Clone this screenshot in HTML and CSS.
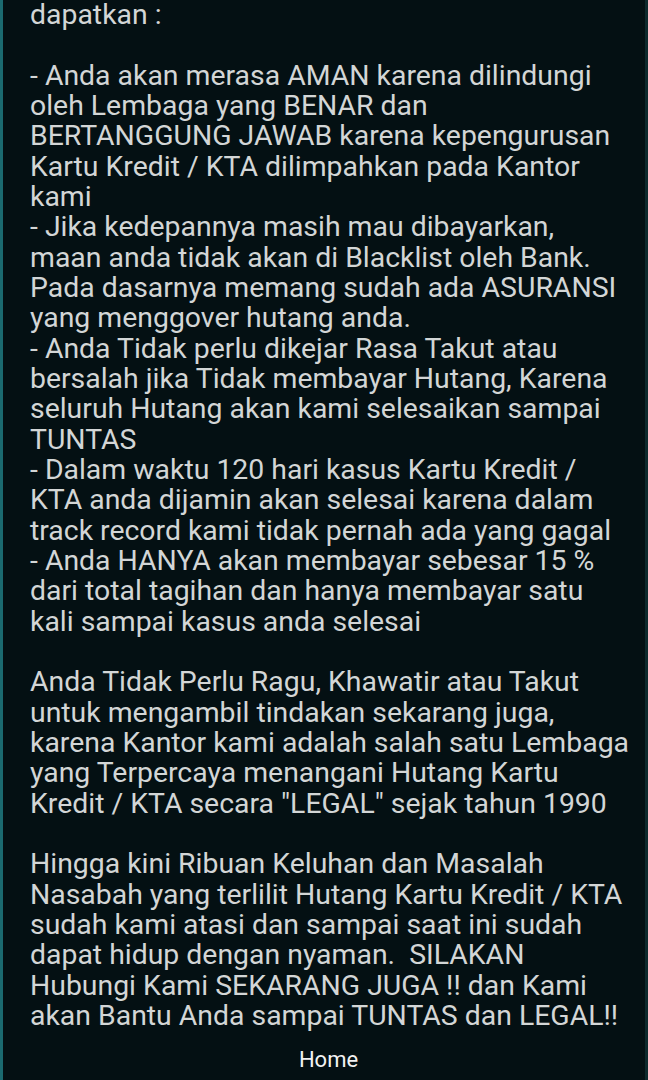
FILE: index.html
```html
<!DOCTYPE html>
<html lang="id">
<head>
<meta charset="utf-8">
<title>Kantor</title>
<link rel="stylesheet" href="styles.css">
</head>
<body>
<div class="frame">
  <main class="content">
    <p>dapatkan :</p>
    <p>- Anda akan merasa AMAN karena dilindungi<br>oleh Lembaga yang BENAR dan<br>BERTANGGUNG JAWAB karena kepengurusan<br>Kartu Kredit / KTA dilimpahkan pada Kantor<br>kami<br>- Jika kedepannya masih mau dibayarkan,<br>maan anda tidak akan di Blacklist oleh Bank.<br>Pada dasarnya memang sudah ada ASURANSI<br>yang menggover hutang anda.<br>- Anda Tidak perlu dikejar Rasa Takut atau<br>bersalah jika Tidak membayar Hutang, Karena<br>seluruh Hutang akan kami selesaikan sampai<br>TUNTAS<br>- Dalam waktu 120 hari kasus Kartu Kredit /<br>KTA anda dijamin akan selesai karena dalam<br>track record kami tidak pernah ada yang gagal<br>- Anda HANYA akan membayar sebesar 15 %<br>dari total tagihan dan hanya membayar satu<br>kali sampai kasus anda selesai</p>
    <p>Anda Tidak Perlu Ragu, Khawatir atau Takut<br>untuk mengambil tindakan sekarang juga,<br>karena Kantor kami adalah salah satu Lembaga<br>yang Terpercaya menangani Hutang Kartu<br>Kredit / KTA secara "LEGAL" sejak tahun 1990</p>
    <p>Hingga kini Ribuan Keluhan dan Masalah<br>Nasabah yang terlilit Hutang Kartu Kredit / KTA<br>sudah kami atasi dan sampai saat ini sudah<br>dapat hidup dengan nyaman.&nbsp; SILAKAN<br>Hubungi Kami SEKARANG JUGA !! dan Kami<br>akan Bantu Anda sampai TUNTAS dan LEGAL!!</p>
  </main>
  <footer class="footer">
    <a class="home" href="#">Home</a>
  </footer>
</div>
</body>
</html>
```
FILE: styles.css
```css
html, body {
  margin: 0;
  padding: 0;
  background: #041013;
}
.frame {
  height: 1080px;
  box-sizing: border-box;
  border-left: 3px solid #1b6a70;
  border-right: 3px solid #0e2a2d;
  overflow: hidden;
  display: flex;
  flex-direction: column;
}
.content {
  padding: 0 0 0 27px;
  font-family: Roboto, "Liberation Sans", sans-serif;
  font-size: 28.4px;
  line-height: 30.33px;
  color: #d3d6d6;
  white-space: nowrap;
}
.content p {
  margin: 0 0 30.33px 0;
}
.content p:last-child {
  margin-bottom: 0;
}
.footer {
  display: flex;
  justify-content: center;
  padding: 15px 0 0 9px;
}
.home {
  font-family: Roboto, "Liberation Sans", sans-serif;
  font-size: 22px;
  line-height: 28px;
  color: #f2f2f2;
  text-decoration: none;
}
```
